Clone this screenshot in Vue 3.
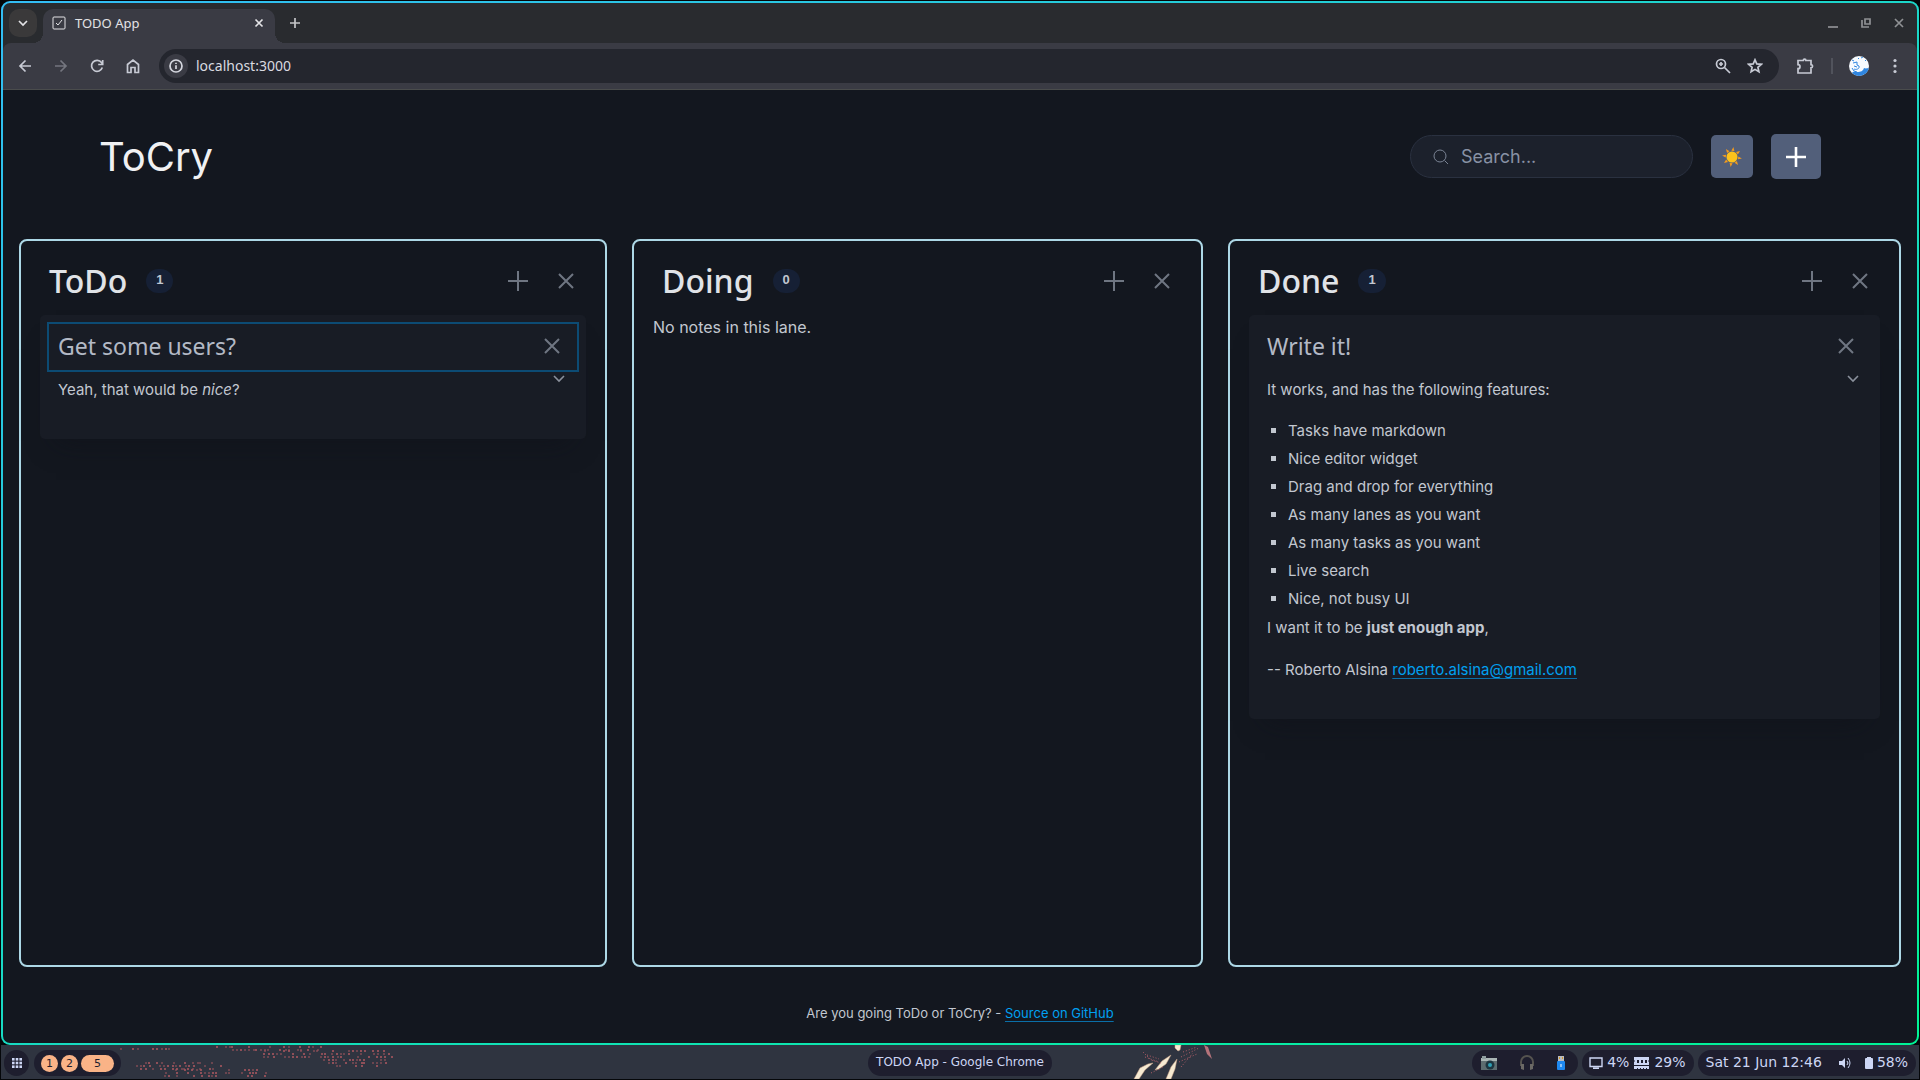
<script setup>
import { ref } from 'vue'

const query = ref('')

const lanes = [
  {
    name: 'ToDo',
    notes: [{ title: 'Get some users?', focused: true, kind: 'users' }],
  },
  { name: 'Doing', notes: [] },
  {
    name: 'Done',
    notes: [{ title: 'Write it!', focused: false, kind: 'features' }],
  },
]

const features = [
  'Tasks have markdown',
  'Nice editor widget',
  'Drag and drop for everything',
  'As many lanes as you want',
  'As many tasks as you want',
  'Live search',
  'Nice, not busy UI',
]

// Halftone clouds of the wallpaper: dots on a loose grid inside ellipses.
const clouds = [
  { cx: 66, cy: 20, rx: 46, ry: 6, keep: 0.6 },
  { cx: 100, cy: 28, rx: 56, ry: 7, keep: 0.45 },
  { cx: 156, cy: 2, rx: 56, ry: 4, keep: 0.6 },
  { cx: 178, cy: 8, rx: 34, ry: 6, keep: 0.65 },
  { cx: 244, cy: 12, rx: 40, ry: 10, keep: 0.5 },
  { cx: 32, cy: 2, rx: 40, ry: 2, keep: 0.25 },
]
function makeDots() {
  let seed = 11
  const next = () => {
    seed = (seed * 1103515245 + 12345) % 2147483648
    return seed / 2147483648
  }
  const dots = []
  for (const c of clouds) {
    for (let y = c.cy - c.ry; y <= c.cy + c.ry; y += 3) {
      for (let x = c.cx - c.rx; x <= c.cx + c.rx; x += 4) {
        const d = ((x - c.cx) / c.rx) ** 2 + ((y - c.cy) / c.ry) ** 2
        if (d < 1 && next() < c.keep && y >= 0) {
          dots.push({ x: Math.round(x + next() * 2), y: Math.round(y), o: next() > 0.5 ? 0.8 : 0.5 })
        }
      }
    }
  }
  return dots
}
const dots = makeDots()
</script>

<template>
  <div class="desktop">
    <div class="window">
      <div class="tabstrip">
        <button class="tab-search" aria-label="Search tabs">
          <svg width="12" height="12" viewBox="0 0 12 12"><path d="M2 4l4 4 4-4" /></svg>
        </button>
        <div class="tab">
          <svg class="favicon" width="14" height="14" viewBox="0 0 14 14">
            <rect x="1" y="1" width="12" height="12" rx="1" />
            <path d="M4 7l2 2 4-5" />
          </svg>
          <span class="tab-title">TODO App</span>
          <button class="bare" aria-label="Close tab">
            <svg width="10" height="10" viewBox="0 0 10 10"><path d="M1.500 1.500l7 7M8.500 1.500l-7 7" /></svg>
          </button>
        </div>
        <button class="bare new-tab" aria-label="New tab">
          <svg width="12" height="12" viewBox="0 0 12 12"><path d="M6 1v10M1 6h10" /></svg>
        </button>
        <div class="win-buttons">
          <button class="bare" aria-label="Minimize">
            <svg width="12" height="12" viewBox="0 0 12 12"><path d="M1 10h10" /></svg>
          </button>
          <button class="bare" aria-label="Restore">
            <svg width="12" height="12" viewBox="0 0 12 12"><path d="M5 2h5v5H5zM2 3v7h7" /></svg>
          </button>
          <button class="bare" aria-label="Close window">
            <svg width="12" height="12" viewBox="0 0 12 12"><path d="M2 2l8 8M10 2l-8 8" /></svg>
          </button>
        </div>
      </div>

      <div class="toolbar">
        <button class="nav" aria-label="Back">
          <svg width="14" height="14" viewBox="0 0 14 14"><path d="M13 7H2M7.500 1.500L2 7l5.500 5.500" /></svg>
        </button>
        <button class="nav dim" aria-label="Forward">
          <svg width="14" height="14" viewBox="0 0 14 14"><path d="M1 7h11M6.500 1.500L12 7l-5.500 5.500" /></svg>
        </button>
        <button class="nav" aria-label="Reload">
          <svg width="14" height="14" viewBox="0 0 14 14"><path d="M12.300 8.500A5.500 5.500 0 1 1 11.500 3.600L12.500 5M12.700 1v4.500H8.200" /></svg>
        </button>
        <button class="nav" aria-label="Home">
          <svg width="14" height="16" viewBox="0 0 14 16"><path d="M1.500 6.500L7 2l5.500 4.500V14.500H9V9.500H5v5H1.500z" /></svg>
        </button>
        <div class="omnibox">
          <button class="site-info" aria-label="Site information">
            <svg width="16" height="16" viewBox="0 0 16 16"><circle cx="8" cy="8" r="6" /><path d="M8 7.200V11M8 4.700v1.300" /></svg>
          </button>
          <input class="url" type="text" value="localhost:3000" aria-label="Address" />
          <button class="bare" aria-label="Zoom">
            <svg width="16" height="16" viewBox="0 0 16 16"><circle cx="6" cy="6" r="4.500" /><path d="M9.500 9.500L15 15M6 4v4M4 6h4" /></svg>
          </button>
          <button class="bare" aria-label="Bookmark">
            <svg width="16" height="16" viewBox="0 0 16 16"><path d="M8 1.800l1.800 4.100 4.500.4-3.400 3 1 4.500L8 11.400l-3.900 2.400 1-4.500-3.400-3 4.500-.4z" /></svg>
          </button>
        </div>
        <button class="bare ext" aria-label="Extensions">
          <svg width="18" height="18" viewBox="0 0 18 18"><path d="M2 3.500h5.300a1.200 1.200 0 0 1 2.600 0H15v4.200a1.500 1.500 0 0 1 0 3.100V16H2v-4.300a2 2 0 0 0 0-4z" /></svg>
        </button>
        <span class="sep"></span>
        <button class="bare profile" aria-label="Profile">
          <svg width="20" height="20" viewBox="0 0 20 20">
            <circle cx="10" cy="10" r="10" fill="#f7fbff" stroke="none" />
            <path d="M3 17c1-2 3-1 5-1 4 0 6-1 7-4 2 1 3 0 4.800 0A10 10 0 0 1 3 17z" fill="#2f86e0" stroke="none" />
            <path d="M4 7l4-1v3l2 1c1 3-3 4-5 3M5 10l3 1M3 4l2 1M12 2l2-1M9 2l1 1M16 4l1 1M3 12l2 3 3 1" stroke="#2f86e0" stroke-width="1" />
          </svg>
        </button>
        <button class="bare" aria-label="Menu">
          <svg width="4" height="16" viewBox="0 0 4 16"><g fill="#c7cad4" stroke="none"><circle cx="2" cy="2.500" r="1.600" /><circle cx="2" cy="8" r="1.600" /><circle cx="2" cy="13.500" r="1.600" /></g></svg>
        </button>
      </div>

      <div class="page">
        <header class="app-header">
          <h1>ToCry</h1>
          <label class="search">
            <svg width="16" height="16" viewBox="0 0 16 16"><circle cx="7" cy="7" r="6" /><path d="M11.500 11.500L15 15" /></svg>
            <input v-model="query" type="search" placeholder="Search..." aria-label="Search notes" />
          </label>
          <button class="theme" aria-label="Toggle theme">
            <svg width="20" height="20" viewBox="0 0 20 20">
              <g fill="#f59b1c">
                <path v-for="a in 8" :key="a" d="M10 0l1.500 3.800h-3z" :transform="`rotate(${a * 45 + 8} 10 10)`" />
              </g>
              <circle cx="10" cy="10" r="5.500" fill="#fcc21b" />
            </svg>
          </button>
          <button class="add-lane" aria-label="Add lane">
            <svg width="20" height="20" viewBox="0 0 20 20"><path d="M10 0v20M0 10h20" stroke-width="2.600" /></svg>
          </button>
        </header>

        <main class="board">
          <section v-for="lane in lanes" :key="lane.name" class="lane">
            <div class="lane-head">
              <h2>{{ lane.name }}</h2>
              <span class="count">{{ lane.notes.length }}</span>
              <div class="lane-actions">
                <button class="icon" :aria-label="`Add note to ${lane.name}`">
                  <svg width="20" height="20" viewBox="0 0 20 20"><path d="M10 0v20M0 10h20" /></svg>
                </button>
                <button class="icon" :aria-label="`Delete ${lane.name}`">
                  <svg width="16" height="16" viewBox="0 0 16 16"><path d="M1 1l14 14M15 1L1 15" /></svg>
                </button>
              </div>
            </div>
            <p v-if="!lane.notes.length" class="empty">No notes in this lane.</p>
            <article v-for="note in lane.notes" :key="note.title" class="note">
              <div class="note-head" :class="{ focused: note.focused }">
                <h3>{{ note.title }}</h3>
                <button class="icon" :aria-label="`Delete ${note.title}`">
                  <svg width="16" height="16" viewBox="0 0 16 16"><path d="M1 1l14 14M15 1L1 15" /></svg>
                </button>
              </div>
              <div class="note-body">
                <div v-if="note.kind === 'users'" class="markdown">
                  <p>Yeah, that would be <em>nice</em>?</p>
                </div>
                <div v-else class="markdown">
                  <p>It works, and has the following features:</p>
                  <ul>
                    <li v-for="f in features" :key="f">{{ f }}</li>
                  </ul>
                  <p>I want it to be <strong>just enough app</strong>,</p>
                  <p>-- Roberto Alsina <a href="mailto:roberto.alsina@gmail.com">roberto.alsina@gmail.com</a></p>
                </div>
                <button class="icon toggle" aria-label="Collapse note">
                  <svg width="12" height="8" viewBox="0 0 12 8"><path d="M1 1l5 5 5-5" stroke-width="1.600" /></svg>
                </button>
              </div>
            </article>
          </section>
        </main>

        <footer class="app-footer">
          Are you going ToDo or ToCry? - <a href="#source">Source on GitHub</a>
        </footer>
      </div>
    </div>

    <div class="panel">
      <svg class="cloud" width="290" height="33" viewBox="0 0 290 33">
        <rect v-for="(d, i) in dots" :key="i" :x="d.x" :y="d.y" width="2" height="2" :opacity="d.o" fill="#a8565e" />
      </svg>
      <svg class="streaks" width="90" height="34" viewBox="0 0 90 34">
        <g fill="#f6ead2" stroke="#c9a184" stroke-width="0.500">
          <path d="M1 34l6-11 8-4 5-1-8 7-6 9z" />
          <path d="M22 25l7-9 9-6-5 9-7 5z" />
          <path d="M33 34l5-12 6-8-2 10-4 10z" />
          <path d="M42 0h6l-1 5-2 1-3-3z" />
        </g>
        <g fill="none" stroke="#b5606a" stroke-dasharray="1 2">
          <path d="M10 7l8 8 10 3M14 10l12 4M12 12l14 5M48 12l18-9M46 17l18-8M48 22l12-14M50 7l14-5M18 28l12-6" />
        </g>
        <path d="M71 0l4 2 4 12-5-5z" fill="#b5737a" />
      </svg>

      <div class="panel-group">
        <button class="pill launcher" aria-label="Applications">
          <svg width="10" height="10" viewBox="0 0 10 10">
            <g fill="#cdd6f4">
              <template v-for="r in 3" :key="r">
                <rect v-for="c in 3" :key="c" :x="(c - 1) * 3.700" :y="(r - 1) * 3.700" width="2.600" height="2.600" />
              </template>
            </g>
          </svg>
        </button>
        <div class="pill workspaces">
          <button>1</button>
          <button>2</button>
          <button class="current">5</button>
        </div>
      </div>
      <div class="pill title">TODO App - Google Chrome</div>
      <div class="panel-group end">
        <div class="pill tray">
          <svg width="18" height="16" viewBox="0 0 18 16">
            <rect x="1" y="3" width="16" height="12" fill="#5d6c70" /><rect x="1" y="3" width="16" height="3" fill="#a9b5b5" />
            <rect x="2" y="1" width="4" height="3" fill="#8f9d9f" /><circle cx="10" cy="10" r="4.500" fill="#1d3540" /><circle cx="10" cy="10" r="2" fill="#2fa0b5" />
          </svg>
          <svg width="16" height="16" viewBox="0 0 16 16">
            <path d="M2 11V7a6 6 0 0 1 12 0v4" fill="none" stroke="#55534f" stroke-width="2" />
            <path d="M2 9l3 0v6l-3-1zM14 9h-3v6l3-1z" fill="#6b6965" />
          </svg>
          <svg width="10" height="14" viewBox="0 0 10 14">
            <rect x="2" y="0" width="6" height="5" fill="#b9bcc0" /><rect x="3" y="1" width="1" height="2" fill="#d49a2a" /><rect x="6" y="1" width="1" height="2" fill="#d49a2a" />
            <rect x="1" y="5" width="8" height="9" rx="1" fill="#1e88f0" /><rect x="4" y="8" width="2" height="3" fill="#8cc4fa" />
          </svg>
        </div>
        <div class="pill stats">
          <svg width="14" height="12" viewBox="0 0 14 12"><path d="M1 1h12v8.500H1zM4 11.200h6" fill="none" stroke="#cdd6f4" stroke-width="1.400" /></svg>
          <span>4%</span>
          <svg width="17" height="12" viewBox="0 0 17 12"><path d="M1 0h15v3l-1 1 1 1v3H1V5l1-1-1-1zM1 9h15v3h-2v-1h-1v1h-2v-1h-1v1H8v-1H7v1H5v-1H4v1H1z" fill="#cdd6f4" /><path d="M4 3h2v3H4zM8 3h2v3H8zM12 3h2v3h-2z" fill="#1e1e2e" /></svg>
          <span>29%</span>
        </div>
        <div class="pill status">
          <span>Sat 21 Jun 12:46</span>
          <svg class="speaker" width="12" height="12" viewBox="0 0 12 12"><path d="M0 4h3l3-3v10L3 8H0z" fill="#cdd6f4" /><path d="M8 4q2 2 0 4M9 1q4 5 0 10" fill="none" stroke="#cdd6f4" /></svg>
          <svg width="8" height="12" viewBox="0 0 8 12"><path d="M2 0h4v1h1q1 0 1 1v9q0 1-1 1H1q-1 0-1-1V2q0-1 1-1h1z" fill="#cdd6f4" /></svg>
          <span>58%</span>
        </div>
      </div>
    </div>
  </div>
</template>

<style>
html,
body,
#app {
  height: 100%;
}
body {
  margin: 0;
  background: #05070a;
}
</style>

<style scoped>
* {
  box-sizing: border-box;
}
h1,
h2,
h3,
p,
ul {
  margin: 0;
  font-weight: 400;
}
button {
  padding: 0;
  border: 0;
  background: none;
  color: inherit;
  font: inherit;
}
svg {
  display: block;
  flex: none;
}
input {
  border: 0;
  padding: 0;
  background: none;
  outline: 0;
  min-width: 0;
}

.desktop {
  min-height: 100%;
  padding: 1px;
  display: flex;
  flex-direction: column;
  font-family: Inter, sans-serif;
}
.window {
  flex: 1;
  display: flex;
  flex-direction: column;
  padding: 2px;
  border-radius: 9px;
  background: linear-gradient(155deg, #33bdf5, #00f596);
}

/* Browser frame */
.tabstrip {
  display: flex;
  align-items: center;
  height: 40px;
  padding: 0 12px 0 6px;
  border-radius: 7px 7px 0 0;
  background: #292b2f;
  box-shadow: 0 8px 0 #292b2f;
  color: #e3e3e6;
  font: 13px/20px "Noto Sans", sans-serif;
}
.tabstrip svg,
.toolbar svg {
  fill: none;
  stroke: currentColor;
  stroke-width: 1.7;
}
.tab-search {
  display: grid;
  place-items: center;
  width: 28px;
  height: 28px;
  border-radius: 10px;
  background: #3a393a;
}
.tab {
  position: relative;
  align-self: flex-end;
  display: flex;
  align-items: center;
  gap: 9px;
  width: 232px;
  height: 34px;
  margin-left: 6px;
  padding: 0 11px 6px 9px;
  border-radius: 10px 10px 0 0;
  background: #3a3b44;
}
.tab::before,
.tab::after {
  content: "";
  position: absolute;
  bottom: 0;
  width: 10px;
  height: 10px;
}
.tab::before {
  right: 100%;
  background: radial-gradient(circle at 0 0, transparent 10px, #3a3b44 10px);
}
.tab::after {
  left: 100%;
  background: radial-gradient(circle at 100% 0, transparent 10px, #3a3b44 10px);
}
.tab .favicon {
  stroke-width: 1;
}
.tab-title {
  flex: 1;
}
.bare {
  display: grid;
  place-items: center;
}
.new-tab {
  margin-left: 14px;
  color: #c4c5c8;
}
.win-buttons {
  display: flex;
  gap: 21px;
  margin-left: auto;
  color: #8f9194;
}
.toolbar {
  display: flex;
  align-items: center;
  height: 47px;
  padding: 0 20px 0 4px;
  border-bottom: 1px solid #4a4c4c;
  border-radius: 8px 8px 0 0;
  background: #3a3b44;
  color: #c7cad4;
}
.nav {
  display: grid;
  place-items: center;
  width: 36px;
  height: 36px;
}
.dim {
  color: #74767f;
}
.omnibox {
  flex: 1;
  display: flex;
  align-items: center;
  gap: 16px;
  height: 34px;
  margin-left: 8px;
  padding: 0 16px 0 5px;
  border-radius: 17px;
  background: #24262e;
}
.site-info {
  display: grid;
  place-items: center;
  width: 24px;
  height: 24px;
  border-radius: 12px;
  background: #3a3b44;
  color: #d5d7df;
}
.url {
  flex: 1;
  margin-left: -8px;
  height: 24px;
  color: #d9dae0;
  font: 14px/24px "Noto Sans", sans-serif;
}
.ext {
  margin-left: 17px;
}
.sep {
  width: 2px;
  height: 16px;
  margin: 0 16px 0 17px;
  background: #51535c;
}
.profile {
  margin-right: 24px;
}

/* Application */
.page {
  flex: 1;
  display: flex;
  flex-direction: column;
  border-radius: 0 0 7px 7px;
  background: #13171f;
  color: #c2c7d0;
}
.app-header {
  display: flex;
  align-items: center;
  gap: 18px;
  padding: 44px 96px 60px;
}
.app-header h1 {
  flex: 1;
  color: #f0f1f3;
  font-size: 40px;
  line-height: 45px;
}
.search {
  display: flex;
  align-items: center;
  gap: 12px;
  width: 283px;
  height: 43px;
  padding: 0 22px;
  border: 1px solid #2a3140;
  border-radius: 22px;
  background: #1c212c;
}
.search svg {
  fill: none;
  stroke: #7b8495;
}
.search input {
  flex: 1;
  height: 30px;
  color: #e0e3e7;
  font: 18px/30px Inter, sans-serif;
}
.search input::placeholder {
  color: #8891a4;
}
.theme,
.add-lane {
  display: grid;
  place-items: center;
  border-radius: 5px;
  background: #525f7a;
}
.theme {
  width: 42px;
  height: 43px;
}
.add-lane {
  width: 50px;
  height: 45px;
}
.add-lane svg {
  stroke: #fff;
}

.board {
  flex: 1;
  display: grid;
  grid-template-columns: 588fr 571fr 673fr;
  gap: 25px;
  padding: 0 16px;
}
.lane {
  padding: 16px 19px;
  border: 2px solid #add8e6;
  border-radius: 8px;
}
.lane-head {
  display: flex;
  align-items: center;
  height: 48px;
  margin-bottom: 10px;
  padding-left: 9px;
}
.lane-head h2 {
  color: #e0e3e7;
  font: 500 32px/40px "Noto Sans", sans-serif;
}
.count {
  height: 24px;
  margin-left: 19px;
  padding: 0 10px;
  border-radius: 12px;
  background: #162035;
  font: 600 13px/22px "Liberation Sans", sans-serif;
}
.lane-actions {
  display: flex;
  gap: 8px;
  margin-left: auto;
}
.icon {
  display: grid;
  place-items: center;
  width: 40px;
  height: 40px;
  color: #6f7682;
}
.icon svg {
  fill: none;
  stroke: currentColor;
  stroke-width: 2;
}
.empty {
  font-size: 16px;
  line-height: 24px;
}
.note {
  padding: 7px 7px 37px;
  border-radius: 5px;
  background: #181c25;
  box-shadow: 0 18px 26px -16px rgba(13, 16, 23, 0.5);
}
.note-head {
  display: flex;
  align-items: center;
  height: 50px;
  padding: 0 5px 2px 9px;
  border: 2px solid transparent;
}
.note-head.focused {
  border-color: #0c4b74;
}
.note-head h3 {
  flex: 1;
  color: #b3b9c5;
  font: 400 23px/30px "Noto Sans", sans-serif;
}
.note-body {
  display: flex;
  align-items: flex-start;
  padding: 0 8px 0 11px;
}
.markdown {
  flex: 1;
  padding-top: 6px;
  font-size: 15px;
  line-height: 24px;
}
.markdown ul {
  margin: 15px 0 3px;
  padding-left: 21px;
  list-style: square;
}
.markdown li {
  line-height: 28px;
}
.markdown p + p {
  margin-top: 18px;
}
.icon.toggle {
  width: 24px;
  height: 14px;
  color: #8a909c;
}
a {
  color: #01a0f0;
  text-decoration: underline;
  text-decoration-color: #0a6fa8;
  text-decoration-skip-ink: none;
  text-underline-offset: 3px;
}
.app-footer {
  padding: 36px 0 20px;
  font-size: 13px;
  line-height: 20px;
  text-align: center;
}

/* Desktop panel */
.panel {
  position: relative;
  display: grid;
  grid-template-columns: 1fr auto 1fr;
  align-items: center;
  height: 34px;
  padding: 2px 3px 0;
  background: #2f3440;
  color: #cdd6f4;
  font: 14px/26px "DejaVu Sans", sans-serif;
}
.cloud,
.streaks {
  position: absolute;
  top: 0;
}
.cloud {
  left: 110px;
}
.streaks {
  left: 59%;
}
.panel-group {
  position: relative;
  display: flex;
  gap: 5px;
}
.end {
  justify-content: flex-end;
  gap: 4px;
}
.pill {
  display: flex;
  align-items: center;
  height: 26px;
  border-radius: 13px;
  background: #1e1e2e;
}
.pill span {
  line-height: 22px;
  padding-bottom: 2px;
}
.launcher {
  justify-content: center;
  width: 25px;
}
.workspaces {
  gap: 3px;
  padding: 0 7px;
}
.workspaces button {
  width: 17px;
  height: 17px;
  border-radius: 9px;
  background: #fab387;
  color: #1e1e2e;
  font-size: 11px;
  line-height: 17px;
}
.workspaces .current {
  width: 33px;
}
.title {
  padding: 0 8px 2px;
  font-size: 12px;
}
.tray {
  gap: 21px;
  padding: 0 12px 0 8px;
}
.stats {
  gap: 4px;
  padding: 0 8px 0 7px;
}
.status {
  gap: 4px;
  padding: 0 8px;
}
.speaker {
  margin: 0 10px 0 13px;
}
</style>
